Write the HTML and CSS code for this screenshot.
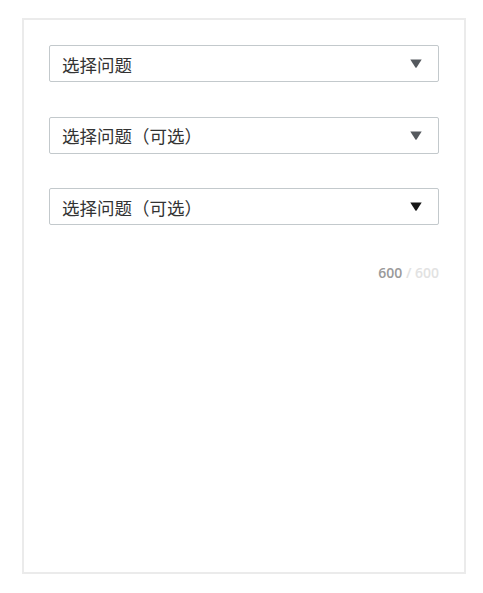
FILE: index.html
```html
<!DOCTYPE html>
<html lang="zh-CN">
<head>
<meta charset="utf-8">
<title>选择问题</title>
<link rel="stylesheet" href="styles.css">
</head>
<body>
<div class="card">
  <div class="selects">
    <div class="select">
      <span class="label">选择问题</span>
      <svg class="arrow" width="12" height="9" viewBox="0 0 12 9"><path d="M0.3 0.4 H11.7 L6.6 8.5 Q6 9.1 5.4 8.5 Z" fill="#55595e"/></svg>
    </div>
    <div class="select">
      <span class="label">选择问题（可选）</span>
      <svg class="arrow" width="12" height="9" viewBox="0 0 12 9"><path d="M0.3 0.4 H11.7 L6.6 8.5 Q6 9.1 5.4 8.5 Z" fill="#55595e"/></svg>
    </div>
    <div class="select">
      <span class="label">选择问题（可选）</span>
      <svg class="arrow" width="12" height="9" viewBox="0 0 12 9"><path d="M0.3 0.4 H11.7 L6.6 8.5 Q6 9.1 5.4 8.5 Z" fill="#161616"/></svg>
    </div>
  </div>
  <div class="counter"><span class="used">600</span><span class="rest"> / 600</span></div>
</div>
</body>
</html>
```
FILE: styles.css
```css
html, body {
  margin: 0;
  padding: 0;
  background: #ffffff;
}

body {
  padding: 18px 0 0 22px;
}

.card {
  box-sizing: border-box;
  width: 444px;
  height: 556px;
  border: 2px solid #ebebeb;
  padding: 25px;
  display: flex;
  flex-direction: column;
}

.selects {
  display: flex;
  flex-direction: column;
  gap: 34.5px;
}

.select {
  box-sizing: border-box;
  height: 37px;
  border: 1px solid #c3c9cc;
  border-radius: 2px;
  padding: 0 16px 0 12px;
  display: flex;
  align-items: center;
  justify-content: space-between;
}

.label {
  font-family: "Noto Sans CJK SC", "Noto Sans", sans-serif;
  font-size: 17.5px;
  line-height: 20px;
  color: #333333;
  padding-top: 2px;
}

.arrow {
  display: block;
  flex: none;
}

.counter {
  margin-top: 38px;
  align-self: flex-end;
  font-family: "Open Sans", "Noto Sans", sans-serif;
  font-weight: 600;
  font-size: 14px;
  line-height: 20px;
}

.used {
  color: #9a9a9a;
}

.rest {
  color: #e2e2e2;
}
```
